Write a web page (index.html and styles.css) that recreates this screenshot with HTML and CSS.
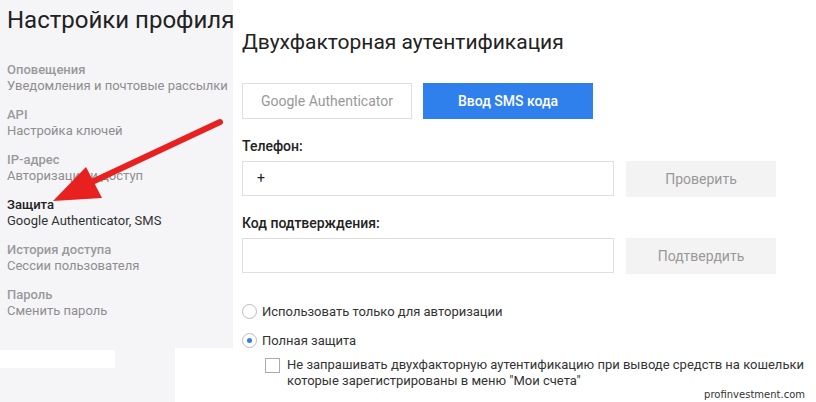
FILE: index.html
```html
<!DOCTYPE html>
<html lang="ru">
<head>
  <meta charset="UTF-8" />
  <title>Настройки профиля</title>
  <link rel="stylesheet" href="styles.css">
</head>
<body>
  <div class="page">
    <aside class="sidebar">
      <div class="side-box">
        <h1>Настройки профиля</h1>
        <ul class="menu">
          <li><b>Оповещения</b><span>Уведомления и почтовые рассылки</span></li>
          <li><b>API</b><span>Настройка ключей</span></li>
          <li><b>IP-адрес</b><span>Авторизация и доступ</span></li>
          <li class="active"><b>Защита</b><span>Google Authenticator, SMS</span></li>
          <li><b>История доступа</b><span>Сессии пользователя</span></li>
          <li><b>Пароль</b><span>Сменить пароль</span></li>
        </ul>
      </div>
      <div class="side-foot"><div class="foot-bar"></div></div>
    </aside>

    <main class="main">
      <h2>Двухфакторная аутентификация</h2>
      <div class="tabs">
        <button class="tab">Google Authenticator</button>
        <button class="tab active">Ввод SMS кода</button>
      </div>

      <label class="field-label">Телефон:</label>
      <div class="row">
        <div class="input">+</div>
        <button class="btn-grey">Проверить</button>
      </div>

      <label class="field-label">Код подтверждения:</label>
      <div class="row">
        <div class="input"></div>
        <button class="btn-grey">Подтвердить</button>
      </div>

      <div class="options">
        <div class="radio"><span class="dot"></span>Использовать только для авторизации</div>
        <div class="radio checked"><span class="dot"></span>Полная защита</div>
        <div class="check">
          <span class="box"></span>
          <p>Не запрашивать двухфакторную аутентификацию при выводе средств на кошельки<br>которые зарегистрированы в меню "Мои счета"</p>
        </div>
      </div>
      <div class="mark">profinvestment.com</div>
    </main>
  </div>

  <svg class="arrow" width="816" height="402" viewBox="0 0 816 402">
    <line x1="220" y1="122" x2="92" y2="182" stroke="#e8201f" stroke-width="6" stroke-linecap="round" />
    <polygon points="53,201 86,167 102,198" fill="#e8201f" />
  </svg>
</body>
</html>
```

FILE: styles.css
```css
* { margin: 0; padding: 0; box-sizing: border-box; }

body {
  width: 816px;
  height: 402px;
  overflow: hidden;
  background: #fff;
  font-family: Roboto, 'Noto Sans', sans-serif;
  position: relative;
}

.page {
  display: flex;
  height: 100%;
}

.sidebar {
  width: 233px;
  display: flex;
  flex-direction: column;
}

.side-box {
  background: #f5f5f7;
  height: 348px;
  padding: 6px 0 0 7px;
}

.side-box h1 {
  font-size: 24px;
  line-height: 28px;
  font-weight: 400;
  color: #222;
  white-space: nowrap;
}

.menu {
  list-style: none;
  margin-top: 28px;
}

.menu li {
  margin-bottom: 13px;
  font-size: 13px;
  line-height: 16px;
}

.menu li b {
  display: block;
  font-weight: 500;
  color: #9a9a9a;
}

.menu li span {
  display: block;
  color: #8e8e8e;
}

.menu li.active b { color: #222; }
.menu li.active span { color: #333; }

.side-foot {
  flex: 1;
  width: 175px;
  background: #f5f5f7;
  padding-top: 2px;
}

.foot-bar {
  width: 115px;
  height: 18px;
  background: #fff;
}

.main {
  flex: 1;
  padding: 30px 0 0 9px;
  position: relative;
}

.main h2 {
  font-size: 21px;
  line-height: 24px;
  font-weight: 400;
  color: #222;
}

.tabs {
  display: flex;
  gap: 11px;
  margin-top: 29px;
}

.tab {
  width: 170px;
  height: 36px;
  border: 1px solid #dedede;
  background: #fff;
  color: #999;
  font-family: inherit;
  font-size: 14px;
}

.tab.active {
  background: #2f80ed;
  border-color: #2f80ed;
  color: #fff;
  font-weight: 500;
}

.field-label {
  display: block;
  margin-top: 19px;
  margin-bottom: 6px;
  font-size: 14px;
  line-height: 17px;
  font-weight: 500;
  color: #222;
}

.row + .field-label { margin-top: 18px; }

.row {
  display: flex;
  gap: 12px;
}

.input {
  width: 372px;
  height: 35px;
  border: 1px solid #dedede;
  padding-left: 14px;
  font-size: 14px;
  line-height: 33px;
  color: #222;
}

.btn-grey {
  width: 150px;
  height: 36px;
  border: none;
  background: #f3f3f3;
  color: #999;
  font-family: inherit;
  font-size: 14px;
}

.options {
  margin-top: 28px;
  font-size: 13px;
  color: #333;
}

.radio {
  display: flex;
  align-items: center;
  gap: 5px;
  height: 18px;
  margin-bottom: 11px;
}

.radio .dot {
  width: 15px;
  height: 15px;
  border: 1px solid #bbb;
  border-radius: 50%;
  position: relative;
}

.radio.checked .dot::after {
  content: "";
  position: absolute;
  top: 4px;
  left: 4px;
  width: 5px;
  height: 5px;
  border-radius: 50%;
  background: #2f80ed;
}

.check {
  display: flex;
  gap: 7px;
  padding-left: 23px;
  margin-top: -3px;
}

.check .box {
  width: 15px;
  height: 15px;
  border: 1px solid #aaa;
  margin-top: 1px;
  flex: none;
}

.check p {
  line-height: 16px;
}

.mark {
  position: absolute;
  right: 11px;
  bottom: 2px;
  font-family: 'DejaVu Sans', sans-serif;
  font-size: 10px;
  color: #333;
}

.arrow {
  position: absolute;
  top: 0;
  left: 0;
  pointer-events: none;
}
```
